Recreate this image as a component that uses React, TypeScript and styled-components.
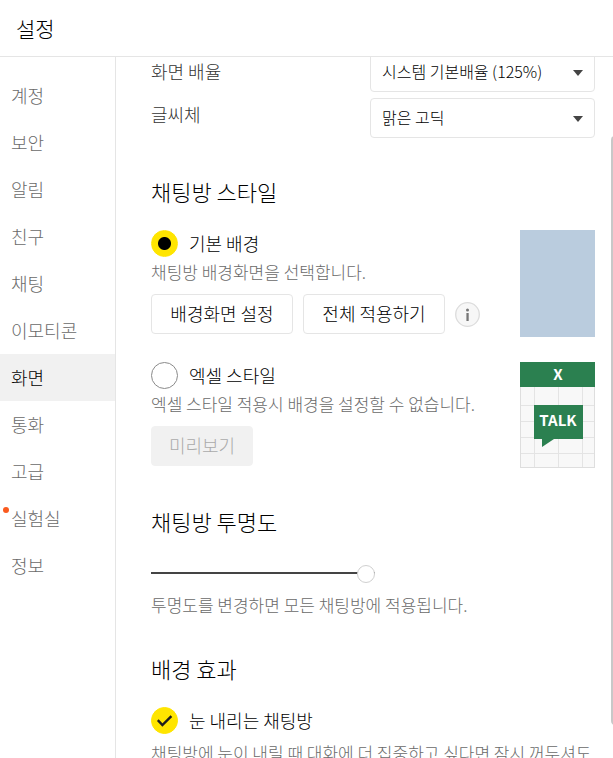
import React, { useState } from "react";
import styled, { createGlobalStyle, css } from "styled-components";

const GlobalStyle = createGlobalStyle`
  *, *::before, *::after { box-sizing: border-box; }
  body {
    margin: 0;
    background: #fff;
    color: #000;
    font-family: "Noto Sans CJK KR", "Noto Sans", sans-serif;
    font-weight: 300;
  }
  button, input, select { font: inherit; color: inherit; margin: 0; }
`;

const Window = styled.div`
  display: flex;
  flex-direction: column;
  height: 100vh;
  overflow: hidden;
`;

const TitleBar = styled.header`
  flex: none;
  padding: 12px 16px;
  border-bottom: 1px solid #e5e5e5;
`;

const Title = styled.h1`
  margin: 0;
  font-size: 21px;
  line-height: 32px;
  font-weight: 300;
`;

const Body = styled.div`
  display: flex;
  flex: 1;
  min-height: 0;
`;

const Sidebar = styled.nav`
  flex: none;
  width: 116px;
  padding-top: 15px;
  border-right: 1px solid #e5e5e5;
`;

const SidebarItem = styled.a<{ $active?: boolean }>`
  display: block;
  padding: 0 11px 1px;
  font-size: 18px;
  line-height: 46px;
  text-decoration: none;
  color: ${(p) => (p.$active ? "#000" : "#6a6a6a")};
  background: ${(p) => (p.$active ? "#f1f1f1" : "transparent")};
`;

const ItemLabel = styled.span`
  position: relative;
`;

const NewDot = styled.span`
  position: absolute;
  top: 2px;
  left: -8px;
  width: 6px;
  height: 6px;
  border-radius: 50%;
  background: #fa5a1e;
`;

const Viewport = styled.main`
  position: relative;
  flex: 1;
  min-width: 0;
  overflow: hidden;
`;

const Scrolled = styled.div`
  margin-top: -5px;
  padding: 0 18px 0 35px;
`;

const ScrollThumb = styled.div`
  position: absolute;
  top: 79px;
  right: -6px;
  width: 8px;
  height: 84%;
  border-radius: 4px;
  background: #c8c8c8;
`;

const Fields = styled.div`
  display: flex;
  justify-content: space-between;
`;

const FieldLabels = styled.div`
  display: flex;
  flex-direction: column;
  gap: 11px;
  padding-top: 3px;
`;

const FieldLabel = styled.label`
  font-size: 18px;
  line-height: 32px;
  color: #333;
`;

const FieldSelects = styled.div`
  display: grid;
  gap: 6px;
  width: 225px;
`;

const SelectBox = styled.div`
  position: relative;
`;

const Select = styled.select`
  display: block;
  width: 100%;
  height: 40px;
  padding: 0 32px 3px 11px;
  appearance: none;
  border: 1px solid #e5e5e5;
  border-radius: 4px;
  background: #fff;
  font-size: 16px;
`;

const SelectArrow = styled.svg`
  position: absolute;
  top: 18px;
  right: 12px;
  pointer-events: none;
`;

const Section = styled.section`
  padding-top: 37px;
`;

const SectionTitle = styled.h2`
  margin: 0 0 23px;
  font-size: 22px;
  line-height: 32px;
  font-weight: 300;
`;

const StyleOptions = styled.div`
  display: grid;
  gap: 25px;
`;

const StyleOption = styled.div`
  display: flex;
  justify-content: space-between;
`;

const OptionLabel = styled.label`
  display: flex;
  align-items: center;
  gap: 11px;
  height: 27px;
  font-size: 18px;
  line-height: 27px;
`;

const control = css`
  display: block;
  flex: none;
  width: 27px;
  height: 27px;
  appearance: none;
  border: 1px solid #8a8a8a;
  border-radius: 50%;
  background: #fff;
`;

const Radio = styled.input`
  ${control}
  &:checked {
    border-color: #ffe500;
    background: radial-gradient(circle, #000 0 6px, #ffe500 7px);
  }
`;

const CheckBox = styled.span`
  position: relative;
  flex: none;
`;

const CheckInput = styled.input`
  ${control}
  &:checked {
    border-color: #ffe500;
    background: #ffe500;
  }
`;

const CheckMark = styled.svg`
  position: absolute;
  inset: 0;
  pointer-events: none;
`;

const Description = styled.p<{ $gap: number }>`
  margin: ${(p) => p.$gap}px 0 0;
  font-size: 17px;
  line-height: 20px;
  color: #6a6a6a;
  white-space: nowrap;
`;

const Actions = styled.div`
  display: flex;
  align-items: center;
  gap: 10px;
  margin-top: 12px;
`;

const Button = styled.button<{ $wide?: boolean }>`
  min-width: ${(p) => (p.$wide ? 142 : 102)}px;
  height: 40px;
  padding: 0 16px 2px;
  border: 1px solid #e5e5e5;
  border-radius: 4px;
  background: #fff;
  font-size: 18px;
  white-space: nowrap;
  &:disabled {
    border-color: #f1f1f1;
    background: #f1f1f1;
    color: #aaa;
  }
`;

const InfoButton = styled.button`
  display: flex;
  padding: 0;
  border: 0;
  background: none;
`;

const Swatch = styled.div`
  flex: none;
  width: 75px;
  height: 107px;
  background: #baccde;
`;

const SheetPreview = styled.svg`
  display: block;
  flex: none;
`;

const SheetText = styled.text`
  font-family: "Noto Sans CJK KR", sans-serif;
  font-size: 15px;
  font-weight: 700;
  fill: #fff;
  text-anchor: middle;
`;

const Slider = styled.input`
  display: block;
  width: 224px;
  height: 18px;
  margin-top: 27px;
  appearance: none;
  background: none;
  &::-webkit-slider-runnable-track {
    height: 2px;
    background: #444;
  }
  &::-webkit-slider-thumb {
    appearance: none;
    width: 18px;
    height: 18px;
    margin-top: -7px;
    border: 1px solid #d0d0d0;
    border-radius: 50%;
    background: #fff;
  }
`;

const menu = ["계정", "보안", "알림", "친구", "채팅", "이모티콘", "화면", "통화", "고급", "실험실", "정보"];

const fields = [
  { id: "scale", label: "화면 배율", value: "시스템 기본배율 (125%)" },
  { id: "font", label: "글씨체", value: "맑은 고딕" },
];

export default function App() {
  const [roomStyle, setRoomStyle] = useState("basic");
  const [snow, setSnow] = useState(true);

  return (
    <Window>
      <GlobalStyle />
      <TitleBar>
        <Title>설정</Title>
      </TitleBar>
      <Body>
        <Sidebar>
          {menu.map((name) => (
            <SidebarItem
              key={name}
              href="#"
              $active={name === "화면"}
              aria-current={name === "화면" ? "page" : undefined}
            >
              <ItemLabel>
                {name}
                {name === "실험실" && <NewDot />}
              </ItemLabel>
            </SidebarItem>
          ))}
        </Sidebar>
        <Viewport>
          <Scrolled>
            <Fields>
              <FieldLabels>
                {fields.map((f) => (
                  <FieldLabel key={f.id} htmlFor={f.id}>
                    {f.label}
                  </FieldLabel>
                ))}
              </FieldLabels>
              <FieldSelects>
                {fields.map((f) => (
                  <SelectBox key={f.id}>
                    <Select id={f.id} defaultValue={f.value}>
                      <option>{f.value}</option>
                    </Select>
                    <SelectArrow width="10" height="6" viewBox="0 0 10 6" aria-hidden="true">
                      <path d="M0 0H10L5 6Z" fill="#444" />
                    </SelectArrow>
                  </SelectBox>
                ))}
              </FieldSelects>
            </Fields>

            <Section>
              <SectionTitle>채팅방 스타일</SectionTitle>
              <StyleOptions>
                <StyleOption>
                  <div>
                    <OptionLabel>
                      <Radio
                        type="radio"
                        name="room-style"
                        checked={roomStyle === "basic"}
                        onChange={() => setRoomStyle("basic")}
                      />
                      기본 배경
                    </OptionLabel>
                    <Description $gap={5}>채팅방 배경화면을 선택합니다.</Description>
                    <Actions>
                      <Button type="button" $wide>
                        배경화면 설정
                      </Button>
                      <Button type="button" $wide>
                        전체 적용하기
                      </Button>
                      <InfoButton type="button" aria-label="정보">
                        <svg width="25" height="25" viewBox="0 0 25 25" aria-hidden="true">
                          <circle cx="12.5" cy="12.5" r="11.8" fill="#f7f7f7" stroke="#dcdcdc" strokeWidth="1.3" />
                          <circle cx="12.5" cy="8" r="1.5" fill="#777" />
                          <rect x="11.4" y="11" width="2.3" height="8" fill="#777" />
                        </svg>
                      </InfoButton>
                    </Actions>
                  </div>
                  <Swatch />
                </StyleOption>

                <StyleOption>
                  <div>
                    <OptionLabel>
                      <Radio
                        type="radio"
                        name="room-style"
                        checked={roomStyle === "excel"}
                        onChange={() => setRoomStyle("excel")}
                      />
                      엑셀 스타일
                    </OptionLabel>
                    <Description $gap={5}>엑셀 스타일 적용시 배경을 설정할 수 없습니다.</Description>
                    <Actions>
                      <Button type="button" disabled>
                        미리보기
                      </Button>
                    </Actions>
                  </div>
                  <SheetPreview width="75" height="106" viewBox="0 0 75 106">
                    <rect x="0.5" y="0.5" width="74" height="105" fill="#f8f8f8" stroke="#dedede" />
                    <path
                      d="M14.5 25V105M38.5 25V105M62.5 25V105M1 43.5H74M1 59.5H74M1 75.5H74M1 91.5H74"
                      stroke="#e4e4e4"
                      fill="none"
                    />
                    <rect width="75" height="25" fill="#2b8050" />
                    <path d="M14 43H63V77H34L22 85V77H14Z" fill="#2b8050" />
                    <SheetText x="38" y="18">
                      X
                    </SheetText>
                    <SheetText x="38" y="64">
                      TALK
                    </SheetText>
                  </SheetPreview>
                </StyleOption>
              </StyleOptions>
            </Section>

            <Section>
              <SectionTitle id="opacity">채팅방 투명도</SectionTitle>
              <Slider type="range" min="0" max="100" defaultValue="100" aria-labelledby="opacity" />
              <Description $gap={13}>투명도를 변경하면 모든 채팅방에 적용됩니다.</Description>
            </Section>

            <Section>
              <SectionTitle>배경 효과</SectionTitle>
              <OptionLabel>
                <CheckBox>
                  <CheckInput type="checkbox" checked={snow} onChange={(e) => setSnow(e.target.checked)} />
                  {snow && (
                    <CheckMark width="27" height="27" viewBox="0 0 27 27" aria-hidden="true">
                      <path d="M6.8 13.2L11.4 18L20.4 9.2" fill="none" stroke="#1e1e1e" strokeWidth="2.4" />
                    </CheckMark>
                  )}
                </CheckBox>
                눈 내리는 채팅방
              </OptionLabel>
              <Description $gap={9}>채팅방에 눈이 내릴 때 대화에 더 집중하고 싶다면 잠시 꺼두셔도</Description>
            </Section>
          </Scrolled>
          <ScrollThumb />
        </Viewport>
      </Body>
    </Window>
  );
}
